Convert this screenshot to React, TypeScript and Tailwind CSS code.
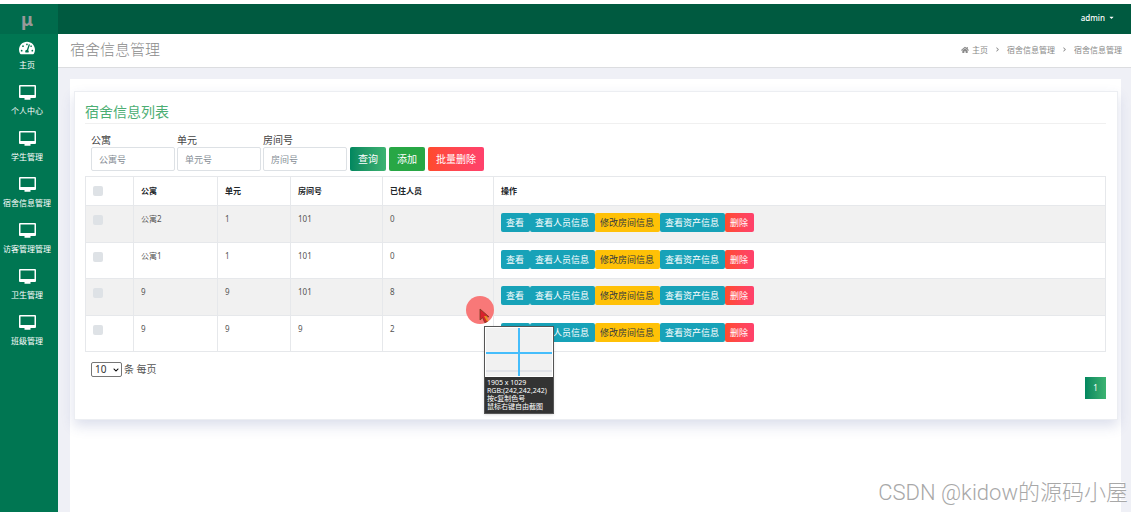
import React from 'react';
import { FaTachometerAlt, FaHome, FaCaretDown, FaChevronRight, FaChevronDown } from 'react-icons/fa';

const menu = ['个人中心', '学生管理', '宿舍信息管理', '访客管理管理', '卫生管理', '班级管理'];

const filters = [
  { id: 'gongyu', label: '公寓', placeholder: '公寓号' },
  { id: 'danyuan', label: '单元', placeholder: '单元号' },
  { id: 'fangjian', label: '房间号', placeholder: '房间号' },
];

const rooms = [
  { id: 1, building: '公寓2', unit: '1', room: '101', count: '0' },
  { id: 2, building: '公寓1', unit: '1', room: '101', count: '0' },
  { id: 3, building: '9', unit: '9', room: '101', count: '8' },
  { id: 4, building: '9', unit: '9', room: '9', count: '2' },
];

const actions = [
  { title: '查看', className: 'bg-[#17a2b8] text-white' },
  { title: '查看人员信息', className: 'bg-[#17a2b8] text-white' },
  { title: '修改房间信息', className: 'bg-[#ffc107] text-[#343a40]' },
  { title: '查看资产信息', className: 'bg-[#17a2b8] text-white' },
  { title: '删除', className: 'bg-linear-to-r from-[#ff4b2b] to-[#ff416c] text-white' },
];

const checkboxClass = 'block w-[10px] h-[10px] appearance-none rounded-[2px] bg-[#dee2e6] checked:bg-[#00875f]';

const DesktopIcon: React.FC = () => (
  <svg width="17" height="15" viewBox="0 0 17 15" fill="currentColor">
    <path fillRule="evenodd" d="M1 0h15a1 1 0 0 1 1 1v11a1 1 0 0 1-1 1h-4.500v1.700H5.500V13H1a1 1 0 0 1-1-1V1a1 1 0 0 1 1-1zm.5 1.500v8.500h14V1.500z" />
  </svg>
);

const Sidebar: React.FC = () => (
  <aside className="w-[58px] shrink-0 bg-[#007652] text-white">
    <div className="h-[30px] flex items-center justify-center bg-[#006b4c] pr-[4px] text-lg font-bold text-[#999]">μ</div>
    <nav>
      <a href="#home" className="h-[46px] pt-[5px] pr-[4px] flex flex-col items-center text-[8px] leading-[12px]">
        <span className="h-[18px] flex items-center"><FaTachometerAlt size={16} /></span>
        <span className="mt-[2px] whitespace-nowrap">主页</span>
      </a>
      {menu.map((item) => (
        <a key={item} href="#menu" className="h-[46px] pt-[3px] pr-[4px] flex flex-col items-center text-[8px] leading-[12px]">
          <span className="h-[18px] flex items-center"><DesktopIcon /></span>
          <span className="mt-[4px] whitespace-nowrap">{item}</span>
        </a>
      ))}
    </nav>
  </aside>
);

const Breadcrumb: React.FC = () => (
  <nav className="flex items-center gap-[7px] text-[8px] text-[#8a8a8a]">
    <a href="#home" className="flex items-center gap-[3px]"><FaHome size={8} />主页</a>
    <FaChevronRight size={5} />
    <a href="#rooms">宿舍信息管理</a>
    <FaChevronRight size={5} />
    <span>宿舍信息管理</span>
  </nav>
);

const RoomTable: React.FC = () => (
  <table className="w-full table-fixed border-collapse text-left text-[8px] text-[#555]">
    <colgroup>
      <col className="w-[48px]" />
      <col className="w-[84px]" />
      <col className="w-[73px]" />
      <col className="w-[92px]" />
      <col className="w-[111px]" />
      <col />
    </colgroup>
    <thead>
      <tr className="h-[29px] text-[#212529] [&>th]:border [&>th]:border-[#e6e8eb] [&>th]:px-[7px]">
        <th><input type="checkbox" aria-label="全选" className={checkboxClass} /></th>
        <th>公寓</th>
        <th>单元</th>
        <th>房间号</th>
        <th>已住人员</th>
        <th>操作</th>
      </tr>
    </thead>
    <tbody>
      {rooms.map((room) => (
        <tr
          key={room.id}
          className="h-[36px] align-top leading-[12px] odd:h-[37px] odd:bg-[#f1f1f1] [&>td]:border [&>td]:border-[#e6e8eb] [&>td]:px-[7px] [&>td]:pt-[7px] [&>td:first-child]:pt-[9px]"
        >
          <td><input type="checkbox" aria-label={room.building} className={checkboxClass} /></td>
          <td>{room.building}</td>
          <td>{room.unit}</td>
          <td>{room.room}</td>
          <td>{room.count}</td>
          <td>
            <div className="flex">
              {actions.map((action) => (
                <button key={action.title} className={`h-[19px] pl-[5px] pr-[6px] rounded-[2px] text-[9px] whitespace-nowrap ${action.className}`}>
                  {action.title}
                </button>
              ))}
            </div>
          </td>
        </tr>
      ))}
    </tbody>
  </table>
);

// Screen picker that floats over the table
const ColorPicker: React.FC = () => (
  <>
    <div className="absolute left-[466px] top-[296px] w-[28px] h-[28px] rounded-full bg-[#f87878]">
      <svg className="absolute left-[13px] top-[12px]" width="11" height="16" viewBox="0 0 11 16">
        <path d="M1 1v11l2.6-2.3 2.2 5 2.6-1.3-2.2-4.6H10z" fill="#d8202c" stroke="#7a3a20" strokeWidth="0.8" />
        <path d="M5 8l3 5.500 1.500-.8L7.500 8z" fill="#e89020" />
      </svg>
    </div>
    <div className="absolute left-[484px] top-[326px] w-[70px] border border-[#555] bg-[#333] shadow-sm">
      <div className="relative h-[50px] border border-white bg-[#f1f1f1]">
        <div className="absolute inset-x-0 bottom-[4px] h-[2px] bg-[#e0e2e8]" />
        <div className="absolute inset-x-0 top-[24px] h-[2px] bg-[#45bdfb]" />
        <div className="absolute inset-y-0 left-[32px] w-[2px] bg-[#45bdfb]" />
      </div>
      <div className="pl-[2px] pt-[2px] pb-[2px] text-[7px] leading-[8px] text-white whitespace-nowrap">
        <p>1905 x 1029</p>
        <p>RGB:(242,242,242)</p>
        <p>按c复制色号</p>
        <p>鼠标右键自由截图</p>
      </div>
    </div>
  </>
);

const App: React.FC = () => {
  return (
    <div className="relative flex min-h-screen overflow-hidden bg-white pt-[4px] font-['Noto_Sans','Noto_Sans_CJK_SC',sans-serif]">
      <Sidebar />
      <div className="flex flex-1 min-w-0 flex-col">
        <header className="h-[30px] flex items-center justify-end bg-[#005a40] pr-4 pb-[3px]">
          <button className="flex items-center gap-[3px] text-[8px] font-medium text-white">
            admin <FaCaretDown size={7} />
          </button>
        </header>
        <div className="h-[34px] flex items-center justify-between border-b border-[#dcdde0] pl-[12px] pr-[9px] pb-[2px]">
          <h1 className="text-[15px] font-light text-[#8c8c8c]">宿舍信息管理</h1>
          <Breadcrumb />
        </div>

        <main className="flex flex-1 flex-col bg-[#eff0f6] pt-[11px] pl-[12px] pr-[10px]">
          <div className="flex-1 bg-white pt-[12px] pl-[4px] pr-[3px]">
            <section className="border border-[#eceef2] bg-white pl-[10px] pr-[11px] pt-[10px] pb-[20px] shadow-[0_6px_12px_rgba(60,80,150,0.18)]">
              <h2 className="border-b border-[#f0f0f0] pb-[1px] text-[14px] leading-[20px] text-[#4cae73]">宿舍信息列表</h2>

              {/* Search form */}
              <form className="flex items-end gap-[3px] pt-[9px] pl-[6px]">
                <div className="flex gap-[2px]">
                  {filters.map((filter) => (
                    <div key={filter.id} className="w-[84px]">
                      <label htmlFor={filter.id} className="block text-[10px] leading-[14px] text-[#444]">{filter.label}</label>
                      <input
                        id={filter.id}
                        placeholder={filter.placeholder}
                        className="block w-full h-[24px] rounded-[2px] border border-[#dde1e5] px-[7px] text-[9px] placeholder:text-[#868e96]"
                      />
                    </div>
                  ))}
                </div>
                <div className="flex gap-[3px] text-[10px] text-white">
                  <button type="button" className="h-[24px] px-[8px] rounded-[2px] bg-linear-to-r from-[#00875f] to-[#3cb371]">查询</button>
                  <button type="button" className="h-[24px] px-[8px] rounded-[2px] bg-[#28a745]">添加</button>
                  <button type="button" className="h-[24px] px-[8px] rounded-[2px] bg-linear-to-r from-[#ff4b2b] to-[#ff416c]">批量删除</button>
                </div>
              </form>

              <div className="pt-[5px]">
                <RoomTable />
              </div>

              <div className="flex items-start justify-between pt-[10px] pl-[6px]">
                <label className="flex items-center gap-[2px] text-[10px] leading-[15px] text-[#555]">
                  <span className="relative">
                    <select defaultValue="10" className="block w-[31px] h-[15px] appearance-none rounded-[2px] border border-[#767676] bg-white pl-[3px] text-[10px] leading-[13px] text-[#333]">
                      <option>10</option>
                      <option>25</option>
                      <option>50</option>
                    </select>
                    <FaChevronDown size={6} className="pointer-events-none absolute right-[3px] top-[5px] text-black" />
                  </span>
                  条 每页
                </label>
                <button className="mt-[15px] w-[21px] h-[22px] bg-linear-to-r from-[#00875f] to-[#3cb371] text-[8px] text-white">1</button>
              </div>
            </section>
          </div>
        </main>
      </div>

      <ColorPicker />
      <div className="absolute right-[3px] bottom-[4px] font-['Roboto','Noto_Sans_CJK_SC',sans-serif] text-[22px] leading-[30px] font-light text-[#a8a8a8] [text-shadow:-1px_-1px_0_#fff]">
        CSDN @kidow的源码小屋
      </div>
    </div>
  );
};

export default App;
